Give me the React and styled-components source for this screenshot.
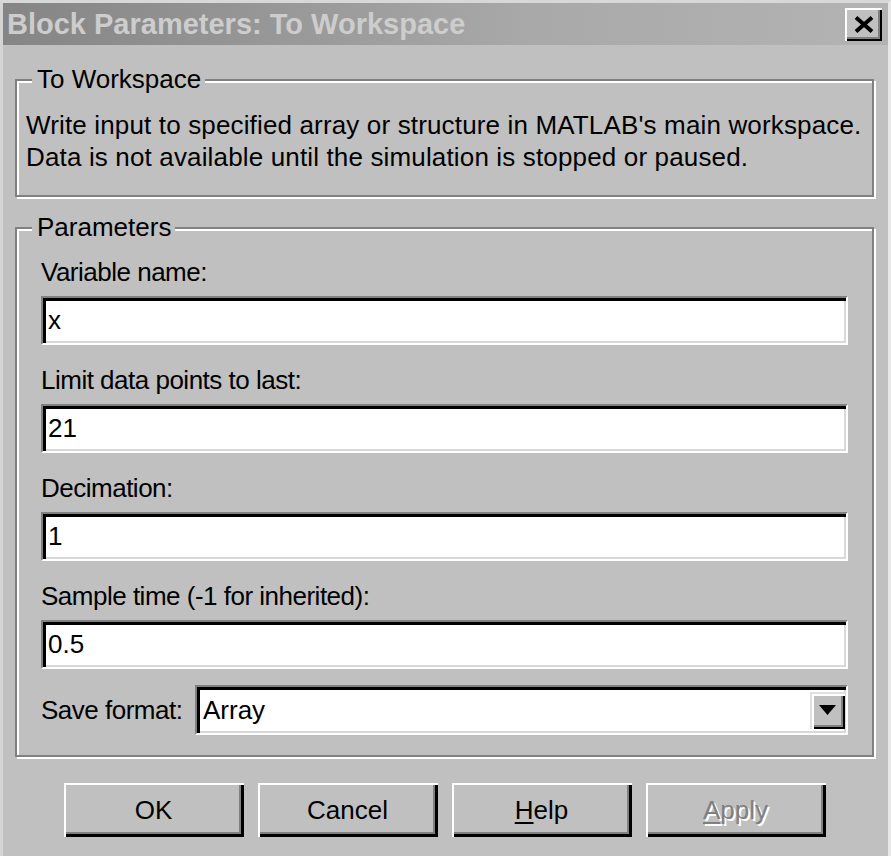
import React from "react";
import styled, { createGlobalStyle } from "styled-components";

const Global = createGlobalStyle`
  html, body { margin: 0; padding: 0; background: #c0c0c0; }
  body { font-family: "Liberation Sans", Arial, sans-serif; }
`;

const Window = styled.div`
  width: 891px;
  height: 856px;
  box-sizing: border-box;
  background: #c0c0c0;
  border-top: 3px solid #d8d8d8;
  border-left: 3px solid #d4d4d4;
  border-right: 3px solid #e8e8e8;
  display: flex;
  flex-direction: column;
  font-family: "Liberation Sans", Arial, sans-serif;
  font-size: 26px;
  color: #000;
`;

const TitleBar = styled.div`
  height: 42px;
  flex: none;
  display: flex;
  align-items: center;
  justify-content: space-between;
  padding: 0 6px 0 4px;
  background: linear-gradient(to right, #858585, #a9a9a9 60%, #b3b3b3);
`;

const TitleText = styled.div`
  font-weight: bold;
  font-size: 29px;
  color: #cdcdcd;
  white-space: nowrap;
  line-height: 1;
`;

const CloseButton = styled.div`
  width: 37px;
  height: 33px;
  box-sizing: border-box;
  background: #c0c0c0;
  display: flex;
  align-items: center;
  justify-content: center;
  box-shadow: inset 2px 2px 0 #fff, inset -2px -2px 0 #000, inset -4px -4px 0 #808080;
`;

const Body = styled.div`
  flex: 1;
  display: flex;
  flex-direction: column;
  padding: 34px 14px 0 12px;
`;

const Group = styled.div`
  position: relative;
  box-sizing: border-box;
  border: 2px solid #808080;
  box-shadow: inset 2px 2px 0 #fff, 2px 2px 0 #fff;
  margin-top: ${(p) => p.$offset || 0}px;
  padding: ${(p) => p.$pad};
`;

const Legend = styled.div`
  position: absolute;
  top: -18px;
  left: 15px;
  line-height: 32px;
  padding: 0 4px 0 5px;
  background: #c0c0c0;
  white-space: nowrap;
`;

const Line = styled.div`
  line-height: 32px;
  white-space: nowrap;
  letter-spacing: 0.15px;
`;

const FieldList = styled.div`
  display: flex;
  flex-direction: column;
  gap: 19px;
`;

const FieldBlock = styled.div`
  display: flex;
  flex-direction: column;
  gap: 8px;
`;

const Label = styled.div`
  line-height: 32px;
  white-space: nowrap;
  letter-spacing: -0.5px;
`;

const sunken = `
  box-sizing: border-box;
  background: #fff;
  border-style: solid;
  border-width: 2px;
  border-color: #808080 #fff #fff #808080;
  box-shadow: inset 3px 3px 0 #000, inset -2px -2px 0 #d8d8d8;
`;

const TextField = styled.div`
  ${sunken}
  height: 49px;
  display: flex;
  align-items: center;
  padding-left: 5px;
  white-space: nowrap;
`;

const SelectRow = styled.div`
  display: flex;
  align-items: center;
  margin-top: 16px;
`;

const SelectLabel = styled(Label)`
  flex: 0 0 154px;
`;

const Select = styled.div`
  ${sunken}
  flex: 1;
  height: 50px;
  display: flex;
  align-items: center;
  justify-content: space-between;
  padding: 0 1px 0 6px;
`;

const DropButton = styled.div`
  width: 35px;
  height: 37px;
  box-sizing: border-box;
  background: #c0c0c0;
  display: flex;
  align-items: center;
  justify-content: center;
  box-shadow: inset 2px 2px 0 #e0e0e0, inset 4px 4px 0 #fff, inset -2px -2px 0 #000, inset -4px -4px 0 #808080;
`;

const ButtonRow = styled.div`
  display: flex;
  justify-content: center;
  gap: 14px;
  margin-top: 26px;
`;

const Button = styled.button`
  width: 180px;
  height: 54px;
  box-sizing: border-box;
  border: none;
  padding: 0;
  margin: 0;
  background: #c0c0c0;
  font: inherit;
  font-size: 26px;
  color: ${(p) => (p.disabled ? "#808080" : "#000")};
  text-shadow: ${(p) => (p.disabled ? "2px 2px 0 #fff" : "none")};
  box-shadow: inset 2px 2px 0 #fff, inset -3px -3px 0 #000, inset -5px -5px 0 #808080;
  cursor: default;
`;

const Key = styled.span`
  text-decoration: underline;
  text-decoration-thickness: 2px;
  text-underline-offset: 3px;
`;

const fields = [
  { label: "Variable name:", value: "x" },
  { label: "Limit data points to last:", value: "21" },
  { label: "Decimation:", value: "1" },
  { label: "Sample time (-1 for inherited):", value: "0.5" },
];

export default function App() {
  return (
    <>
      <Global />
      <Window>
        <TitleBar>
          <TitleText>Block Parameters: To Workspace</TitleText>
          <CloseButton>
            <svg width="20" height="17" viewBox="0 0 20 17">
              <path d="M2 1.5 L18 15.5 M18 1.5 L2 15.5" stroke="#000" strokeWidth="4" fill="none" />
            </svg>
          </CloseButton>
        </TitleBar>
        <Body>
          <Group $pad="28px 9px 22px 9px">
            <Legend>To Workspace</Legend>
            <Line>Write input to specified array or structure in MATLAB's main workspace.</Line>
            <Line>Data is not available until the simulation is stopped or paused.</Line>
          </Group>
          <Group $offset={30} $pad="27px 24px 20px 24px">
            <Legend>Parameters</Legend>
            <FieldList>
              {fields.map((f) => (
                <FieldBlock key={f.label}>
                  <Label>{f.label}</Label>
                  <TextField>{f.value}</TextField>
                </FieldBlock>
              ))}
            </FieldList>
            <SelectRow>
              <SelectLabel>Save format:</SelectLabel>
              <Select>
                <span>Array</span>
                <DropButton>
                  <svg width="17" height="10" viewBox="0 0 17 10">
                    <polygon points="0,0 17,0 8.5,10" fill="#000" />
                  </svg>
                </DropButton>
              </Select>
            </SelectRow>
          </Group>
          <ButtonRow>
            <Button>OK</Button>
            <Button>Cancel</Button>
            <Button><Key>H</Key>elp</Button>
            <Button disabled><Key>A</Key>pply</Button>
          </ButtonRow>
        </Body>
      </Window>
    </>
  );
}
